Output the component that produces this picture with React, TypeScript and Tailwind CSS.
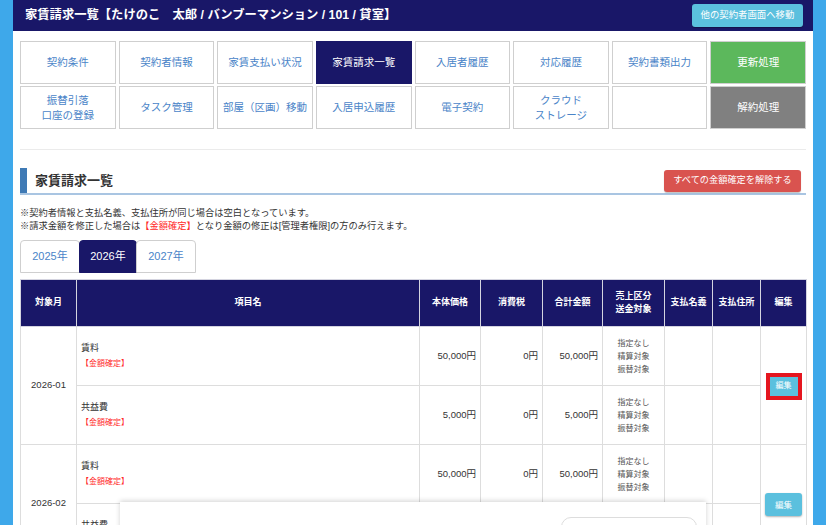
import React from "react";

const tabsRow1: { label: React.ReactNode; kind?: "active" | "green" | "gray" }[] = [
  { label: "契約条件" },
  { label: "契約者情報" },
  { label: "家賃支払い状況" },
  { label: "家賃請求一覧", kind: "active" },
  { label: "入居者履歴" },
  { label: "対応履歴" },
  { label: "契約書類出力" },
  { label: "更新処理", kind: "green" },
];

const tabsRow2: { label: React.ReactNode; kind?: "active" | "green" | "gray" }[] = [
  { label: (<>振替引落<br />口座の登録</>) },
  { label: "タスク管理" },
  { label: "部屋（区画）移動" },
  { label: "入居申込履歴" },
  { label: "電子契約" },
  { label: (<>クラウド<br />ストレージ</>) },
  { label: "" },
  { label: "解約処理", kind: "gray" },
];

function NavCell({ label, kind }: { label: React.ReactNode; kind?: "active" | "green" | "gray" }) {
  let cls = "bg-white text-[#4a84c8] border-[#cfcfcf]";
  if (kind === "active") cls = "bg-[#191768] text-white border-[#191768]";
  if (kind === "green") cls = "bg-[#5cb85c] text-white border-[#cfcfcf]";
  if (kind === "gray") cls = "bg-[#808080] text-white border-[#cfcfcf]";
  return (
    <div className={`h-[43px] border flex items-center justify-center text-center text-[10.5px] leading-[15px] ${cls}`}>
      {label}
    </div>
  );
}

type Item = { name: string; price: string; tax: string; total: string };

const months: { month: string; items: Item[] }[] = [
  {
    month: "2026-01",
    items: [
      { name: "賃料", price: "50,000円", tax: "0円", total: "50,000円" },
      { name: "共益費", price: "5,000円", tax: "0円", total: "5,000円" },
    ],
  },
  {
    month: "2026-02",
    items: [
      { name: "賃料", price: "50,000円", tax: "0円", total: "50,000円" },
      { name: "共益費", price: "5,000円", tax: "0円", total: "5,000円" },
    ],
  },
];

export default function App() {
  return (
    <div className="w-[826px] h-[525px] overflow-hidden bg-[#3ea8ea] px-[13px] font-['Liberation_Sans','Noto_Sans_CJK_JP',sans-serif] text-[#333]">
      <div className="relative h-full bg-white">
        <header className="h-[31px] bg-[#191768] flex items-center justify-between pl-[12px] pr-[10px]">
          <h1 className="text-white text-[12.3px] font-bold">
            家賃請求一覧【たけのこ　太郎 / バンブーマンション / 101 / 貸室】
          </h1>
          <button className="h-[23px] w-[111px] rounded-[3px] bg-[#5bc0de] text-white text-[9.4px] shadow-[0_1px_1px_rgba(0,0,0,0.3)]">
            他の契約者画面へ移動
          </button>
        </header>

        <div className="px-[7px]">
          <nav className="mt-[10px] grid grid-cols-8 gap-x-[3px] gap-y-[2px]">
            {tabsRow1.map((t, i) => (
              <NavCell key={"a" + i} label={t.label} kind={t.kind} />
            ))}
            {tabsRow2.map((t, i) => (
              <NavCell key={"b" + i} label={t.label} kind={t.kind} />
            ))}
          </nav>

          <div className="mt-[20px] border-t border-[#ebebeb]" />

          <div className="mt-[18px] flex h-[27px] items-stretch border-b-2 border-[#a9c5e2]">
            <div className="w-[7px] bg-[#3f7ab5]" />
            <div className="flex-1 flex items-center justify-between pl-[8px] pr-[5px]">
              <h2 className="text-[13px] font-bold text-[#333]">家賃請求一覧</h2>
              <button className="h-[22px] w-[137px] rounded-[3px] bg-[#d9534f] text-white text-[9.2px] shadow-[0_1px_1px_rgba(0,0,0,0.25)]">
                すべての金額確定を解除する
              </button>
            </div>
          </div>

          <div className="mt-[12px] text-[9.25px] leading-[13px] text-[#333]">
            <p>※契約者情報と支払名義、支払住所が同じ場合は空白となっています。</p>
            <p>
              ※請求金額を修正した場合は<span className="text-[#ff2a2a]">【金額確定】</span>となり金額の修正は[管理者権限]の方のみ行えます。
            </p>
          </div>

          <div className="mt-[7px] flex">
            <div className="h-[33px] w-[60px] border border-[#cfcfcf] rounded-t-[4px] flex items-center justify-center text-[11px] text-[#4a84c8]">2025年</div>
            <div className="h-[33px] w-[58px] -ml-px border border-[#191768] rounded-t-[4px] bg-[#191768] flex items-center justify-center text-[11px] text-white">2026年</div>
            <div className="h-[33px] w-[60px] -ml-px border border-[#cfcfcf] rounded-t-[4px] flex items-center justify-center text-[11px] text-[#4a84c8]">2027年</div>
          </div>

          <table className="mt-[6px] w-full table-fixed border-collapse">
            <colgroup>
              <col className="w-[56px]" />
              <col className="w-[343px]" />
              <col className="w-[61px]" />
              <col className="w-[62px]" />
              <col className="w-[60px]" />
              <col className="w-[62px]" />
              <col className="w-[48px]" />
              <col className="w-[48px]" />
              <col className="w-[46px]" />
            </colgroup>
            <thead>
              <tr className="h-[47px]">
                {["対象月", "項目名", "本体価格", "消費税", "合計金額"].map((h) => (
                  <th key={h} className="bg-[#191768] border border-[#d4d4e0] text-white text-[9px] font-bold">{h}</th>
                ))}
                <th className="bg-[#191768] border border-[#d4d4e0] text-white text-[9px] font-bold leading-[13px]">売上区分<br />送金対象</th>
                {["支払名義", "支払住所", "編集"].map((h) => (
                  <th key={h} className="bg-[#191768] border border-[#d4d4e0] text-white text-[9px] font-bold">{h}</th>
                ))}
              </tr>
            </thead>
            <tbody>
              {months.map((m, mi) =>
                m.items.map((it, ii) => (
                  <tr key={m.month + ii} className="h-[59px]">
                    {ii === 0 && (
                      <td rowSpan={m.items.length} className="border border-[#dddddd] text-center text-[9.5px]">
                        {m.month}
                      </td>
                    )}
                    <td className="border border-[#dddddd] pl-[4px] text-[9px] leading-[15px]">
                      <div>{it.name}</div>
                      <div className="text-[#ff2a2a] text-[8px]">【金額確定】</div>
                    </td>
                    <td className="border border-[#dddddd] pr-[4px] text-right text-[9.5px]">{it.price}</td>
                    <td className="border border-[#dddddd] pr-[4px] text-right text-[9.5px]">{it.tax}</td>
                    <td className="border border-[#dddddd] pr-[4px] text-right text-[9.5px]">{it.total}</td>
                    <td className="border border-[#dddddd] text-center text-[8px] leading-[13px] text-[#555]">
                      <div>指定なし</div>
                      <div>精算対象</div>
                      <div>振替対象</div>
                    </td>
                    <td className="border border-[#dddddd]" />
                    <td className="border border-[#dddddd]" />
                    {ii === 0 && (
                      <td rowSpan={m.items.length} className="border border-[#dddddd] text-center align-middle">
                        {mi === 0 ? (
                          <span className="inline-block border-[4px] border-[#e5161f]">
                            <span className="flex h-[19px] w-[28px] items-center justify-center bg-[#5bc0de] text-white text-[8px]">編集</span>
                          </span>
                        ) : (
                          <span className="inline-flex h-[23px] w-[37px] items-center justify-center rounded-[3px] bg-[#5bc0de] text-white text-[8.5px] shadow-[0_1px_2px_rgba(0,0,0,0.3)]">編集</span>
                        )}
                      </td>
                    )}
                  </tr>
                ))
              )}
            </tbody>
          </table>
        </div>

        <div className="absolute left-[107px] top-[502px] h-[40px] w-[586px] bg-white shadow-[0_-1px_5px_rgba(0,0,0,0.18)]">
          <div className="absolute left-[441px] top-[15px] h-[30px] w-[136px] rounded-[10px] border border-[#dddddd] bg-white" />
        </div>
      </div>
    </div>
  );
}
